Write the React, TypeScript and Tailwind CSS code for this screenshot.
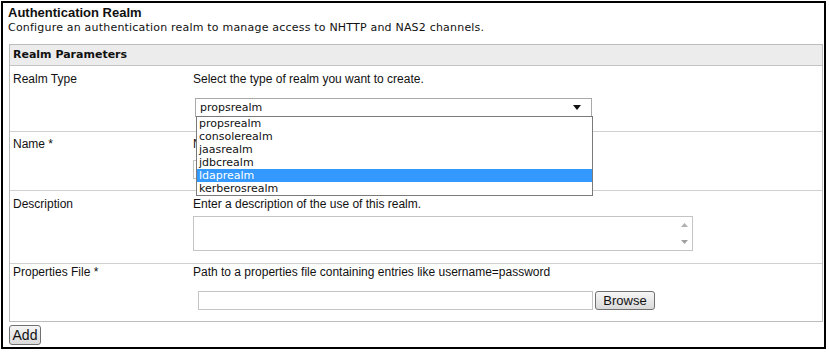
import React from "react";

const arial = { fontFamily: '"Liberation Sans", Arial, sans-serif' };
const verdana = { fontFamily: '"DejaVu Sans", Verdana, sans-serif' };

const realmTypes = [
  "propsrealm",
  "consolerealm",
  "jaasrealm",
  "jdbcrealm",
  "ldaprealm",
  "kerberosrealm",
];

type RowProps = {
  label: string;
  className?: string;
  children?: React.ReactNode;
};

const Row: React.FC<RowProps> = ({ label, className, children }) => {
  return (
    <div className={`flex ${className ?? ""}`}>
      <div className="w-[183px] shrink-0 pl-[3px] text-[12px] leading-[14px] text-[#111]" style={arial}>
        {label}
      </div>
      <div className="flex-1 flex flex-col items-start text-[12px] leading-[14px] text-[#111]" style={arial}>
        {children}
      </div>
    </div>
  );
};

const Button: React.FC<{ className?: string; children: React.ReactNode }> = ({ className, children }) => (
  <div
    className={`flex items-center justify-center rounded-[3px] border border-[#707070] bg-gradient-to-b from-[#f6f6f6] to-[#dadada] text-[#111] ${className ?? ""}`}
    style={arial}
  >
    {children}
  </div>
);

export default function App() {
  return (
    <div className="ml-px mt-px w-[825px] h-[348px] border-2 border-black pl-[5px] pr-[1px] pt-[2px] bg-white">
      <div className="text-[13px] leading-[16px] font-bold text-[#111]" style={arial}>
        Authentication Realm
      </div>
      <div className="text-[11px] leading-[14px] tracking-[0.2px] text-[#111]" style={verdana}>
        Configure an authentication realm to manage access to NHTTP and NAS2 channels.
      </div>

      <div className="ml-px mt-[9px] w-[814px] border border-[#bcbcbc]">
        <div className="h-[21px] flex items-center bg-[#ececec] border-b border-[#c4c4c4] pl-[3px] text-[11px] font-bold text-[#111]" style={verdana}>
          Realm Parameters
        </div>

        <Row label="Realm Type" className="h-[66px] pt-[6px] border-b border-[#d0d0d0]">
          <div>Select the type of realm you want to create.</div>
          <div className="relative ml-[2px] mt-[12px] w-[397px] h-[19px] border border-[#a9a9a9] bg-white flex items-center justify-between pl-[4px] pr-[10px] z-10">
            <span className="text-[11px] leading-[13px]" style={verdana}>propsrealm</span>
            <svg width="8" height="5" viewBox="0 0 8 5">
              <path d="M0 0 L8 0 L4 5 Z" fill="#111" />
            </svg>
            <div className="absolute left-0 top-full w-[397px] border border-[#7a7a7a] bg-white">
              {realmTypes.map((t) => (
                <div
                  key={t}
                  className={`h-[13px] pl-[2px] text-[11px] leading-[13px] ${t === "ldaprealm" ? "bg-[#3399ff] text-white" : "text-[#111]"}`}
                  style={verdana}
                >
                  {t}
                </div>
              ))}
            </div>
          </div>
        </Row>

        <Row label="Name *" className="h-[59px] pt-[5px] border-b border-[#d0d0d0]">
          <div>Name of the realm.</div>
          <div className="mt-[9px] w-[397px] h-[19px] border border-[#c4c4c4] bg-white" />
        </Row>

        <Row label="Description" className="h-[73px] pt-[6px] border-b border-[#d0d0d0]">
          <div>Enter a description of the use of this realm.</div>
          <div className="mt-[5px] w-[500px] h-[35px] border border-[#c4c4c4] bg-white flex justify-end">
            <div className="w-[16px] flex flex-col items-center justify-between py-[6px]">
              <svg width="7" height="4" viewBox="0 0 7 4">
                <path d="M0 4 L7 4 L3.5 0 Z" fill="#b0b0b0" />
              </svg>
              <svg width="7" height="4" viewBox="0 0 7 4">
                <path d="M0 0 L7 0 L3.5 4 Z" fill="#a0a0a0" />
              </svg>
            </div>
          </div>
        </Row>

        <Row label="Properties File *" className="h-[57px] pt-[1px]">
          <div>Path to a properties file containing entries like username=password</div>
          <div className="mt-[12px] ml-[5px] flex items-center gap-[2px]">
            <div className="w-[395px] h-[19px] border border-[#c4c4c4] bg-white" />
            <Button className="w-[60px] h-[19px] text-[13px]">Browse</Button>
          </div>
        </Row>
      </div>

      <Button className="ml-px mt-[3px] w-[32px] h-[20px] text-[14px]">Add</Button>
    </div>
  );
}
